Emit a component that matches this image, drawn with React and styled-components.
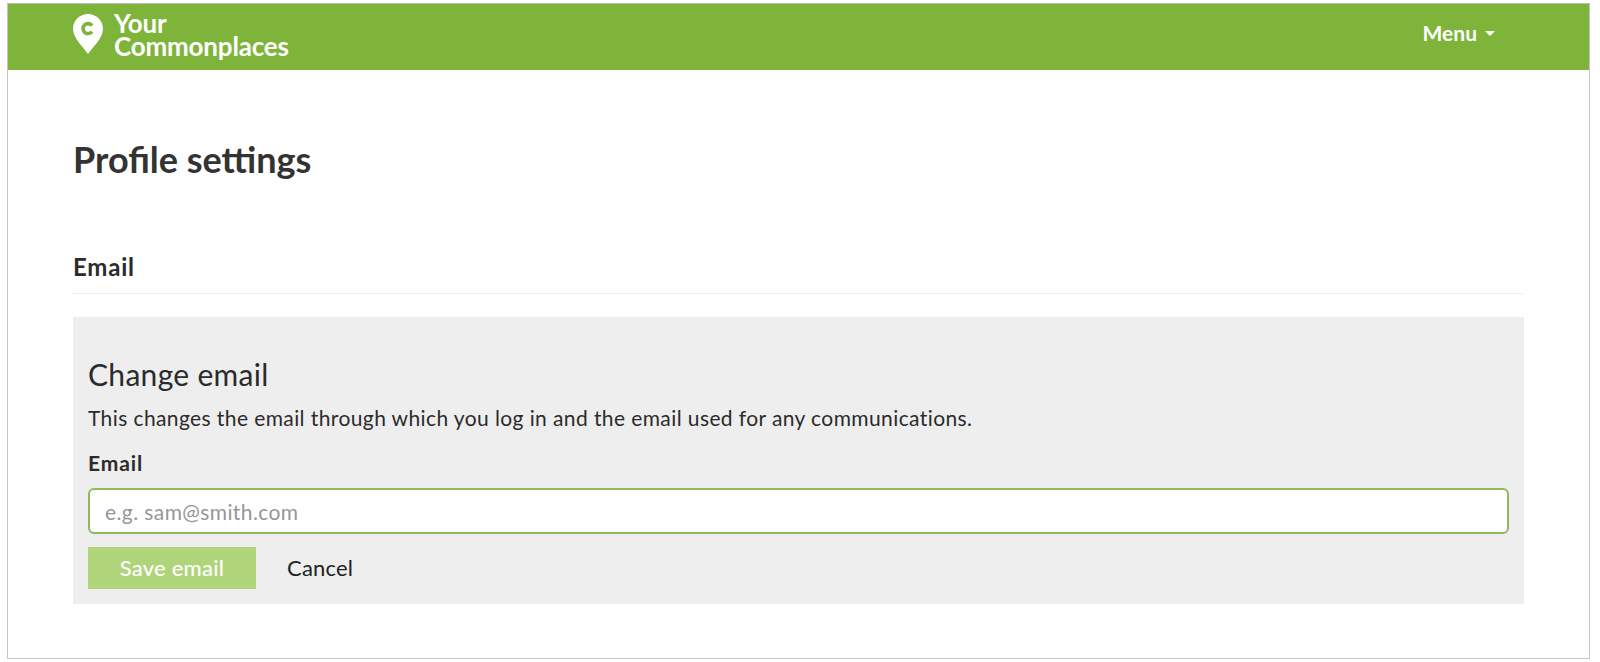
import React from 'react';
import styled, { createGlobalStyle } from 'styled-components';

const GlobalStyle = createGlobalStyle`
  html, body {
    margin: 0;
    padding: 0;
    background: #fff;
  }
  body {
    font-family: 'Lato', 'Open Sans', sans-serif;
    color: #2b2b2b;
  }
`;

const Frame = styled.div`
  box-sizing: border-box;
  width: 1583px;
  height: 656px;
  margin: 3px 0 0 7px;
  border: 1px solid #c4c4c4;
  border-top-color: #b8b8b8;
`;

const Header = styled.header`
  height: 66px;
  background: #7eb439;
  display: flex;
  align-items: center;
  justify-content: space-between;
  padding: 0 94px 0 65px;
  color: #fff;
`;

const Logo = styled.div`
  display: flex;
  align-items: flex-start;
  gap: 11px;
  margin-top: -2px;
`;

const PinSvg = styled.svg`
  flex-shrink: 0;
`;

const LogoText = styled.div`
  font-size: 26px;
  font-weight: 700;
  line-height: 23px;
  letter-spacing: -0.2px;
  margin-top: -2px;
`;

const MenuToggle = styled.div`
  display: flex;
  align-items: center;
  gap: 8px;
  font-size: 21px;
  font-weight: 700;
  margin-top: -10px;
`;

const Caret = styled.span`
  width: 0;
  height: 0;
  margin-top: 3px;
  border-top: 5px solid #fff;
  border-left: 5px solid transparent;
  border-right: 5px solid transparent;
`;

const Main = styled.main`
  padding: 0 65px;
  width: 1451px;
`;

const Title = styled.h1`
  margin: 0;
  padding-top: 69px;
  font-size: 36px;
  line-height: 40px;
  font-weight: 700;
  color: #333;
`;

const SectionTitle = styled.h2`
  margin: 0;
  padding: 73px 0 11px;
  font-size: 24px;
  line-height: 30px;
  font-weight: 700;
  letter-spacing: 0.8px;
  color: #2b2b2b;
  border-bottom: 1px solid #eee;
`;

const Panel = styled.section`
  margin-top: 23px;
  height: 287px;
  box-sizing: border-box;
  background: #eeeeee;
  padding: 39px 15px 0;
`;

const PanelTitle = styled.h3`
  margin: 0;
  font-size: 30px;
  line-height: 36px;
  font-weight: 400;
  letter-spacing: 0.3px;
  color: #2b2b2b;
`;

const PanelText = styled.p`
  margin: 13px 0 0;
  font-size: 21px;
  line-height: 26px;
  letter-spacing: 0.4px;
  color: #2b2b2b;
`;

const FieldLabel = styled.label`
  display: block;
  margin-top: 19px;
  font-size: 21px;
  line-height: 26px;
  font-weight: 700;
  letter-spacing: 0.9px;
  color: #2b2b2b;
`;

const EmailInput = styled.input`
  display: block;
  box-sizing: border-box;
  width: 100%;
  height: 46px;
  margin-top: 12px;
  padding: 0 15px;
  border: 2px solid #8fb95a;
  border-radius: 6px;
  background: #fff;
  font-family: inherit;
  font-size: 21px;
  letter-spacing: 0.4px;
  outline: none;

  &::placeholder {
    color: #969696;
    opacity: 1;
  }
`;

const Actions = styled.div`
  display: flex;
  align-items: center;
  gap: 31px;
  margin-top: 13px;
`;

const SaveButton = styled.button`
  width: 168px;
  height: 42px;
  border: none;
  background: #afd47a;
  color: #fff;
  font-family: inherit;
  font-size: 22px;
  font-weight: 500;
  letter-spacing: 0.2px;
  padding: 0 0 2px;
`;

const CancelLink = styled.a`
  font-size: 22px;
  letter-spacing: 0.2px;
  color: #222;
  margin-top: -2px;
`;

const LogoPin = () => (
  <PinSvg width="30" height="40" viewBox="0 0 30 40">
    <path
      fill="#fff"
      d="M15 0C6.7 0 0 6.6 0 14.8 0 24 10 33 15 40c5-7 15-16 15-25.2C30 6.6 23.3 0 15 0Z"
    />
    <path
      fill="none"
      stroke="#7eb439"
      strokeWidth="3.6"
      d="M19 11.6a5 5 0 1 0 0 6"
    />
  </PinSvg>
);

const App = () => (
  <>
    <GlobalStyle />
    <Frame>
      <Header>
        <Logo>
          <LogoPin />
          <LogoText>
            Your
            <br />
            Commonplaces
          </LogoText>
        </Logo>
        <MenuToggle>
          Menu
          <Caret />
        </MenuToggle>
      </Header>
      <Main>
        <Title>Profile settings</Title>
        <SectionTitle>Email</SectionTitle>
        <Panel>
          <PanelTitle>Change email</PanelTitle>
          <PanelText>
            This changes the email through which you log in and the email used for any communications.
          </PanelText>
          <FieldLabel htmlFor="email">Email</FieldLabel>
          <EmailInput id="email" type="email" placeholder="e.g. sam@smith.com" />
          <Actions>
            <SaveButton type="button">Save email</SaveButton>
            <CancelLink>Cancel</CancelLink>
          </Actions>
        </Panel>
      </Main>
    </Frame>
  </>
);

export default App;
